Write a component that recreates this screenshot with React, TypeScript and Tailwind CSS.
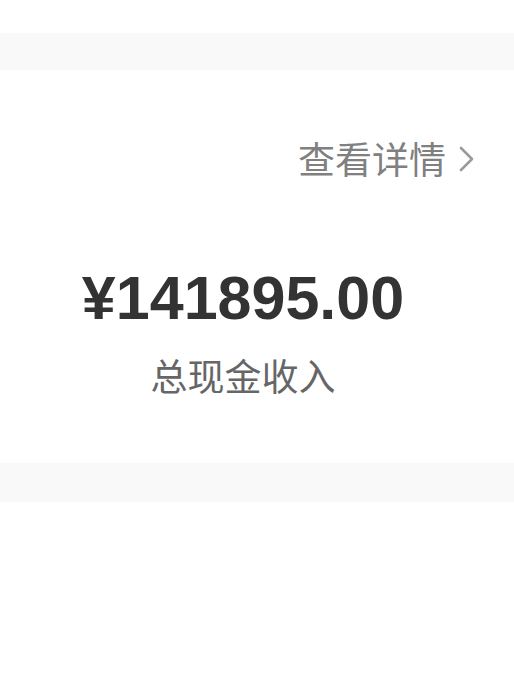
export default function App() {
  return (
    <div className="min-h-[685px] bg-white font-['Noto_Sans_CJK_SC',sans-serif]">
      <div className="h-[33px]" />
      <div className="h-[37px] bg-[#f9f9f9]" />
      <section className="h-[393px] flex flex-col">
        <div className="flex items-center justify-end pr-[38px] pt-[70px] text-[37px] leading-none text-[#808080]">
          <span>查看详情</span>
          <svg width="18" height="30" viewBox="0 0 18 30" className="ml-[12px]" fill="none">
            <path d="M3 4 L14 15 L3 26" stroke="#9a9a9a" strokeWidth="2.6" strokeLinecap="round" strokeLinejoin="round" />
          </svg>
        </div>
        <div className="flex flex-col items-center pr-[28px] mt-[91px]">
          <div className="font-['Liberation_Sans',sans-serif] font-bold text-[61px] leading-none text-[#333333]">
            ¥141895.00
          </div>
          <div className="mt-[28px] text-[37px] leading-none text-[#666666]">总现金收入</div>
        </div>
      </section>
      <div className="h-[39px] bg-[#f9f9f9]" />
    </div>
  );
}
